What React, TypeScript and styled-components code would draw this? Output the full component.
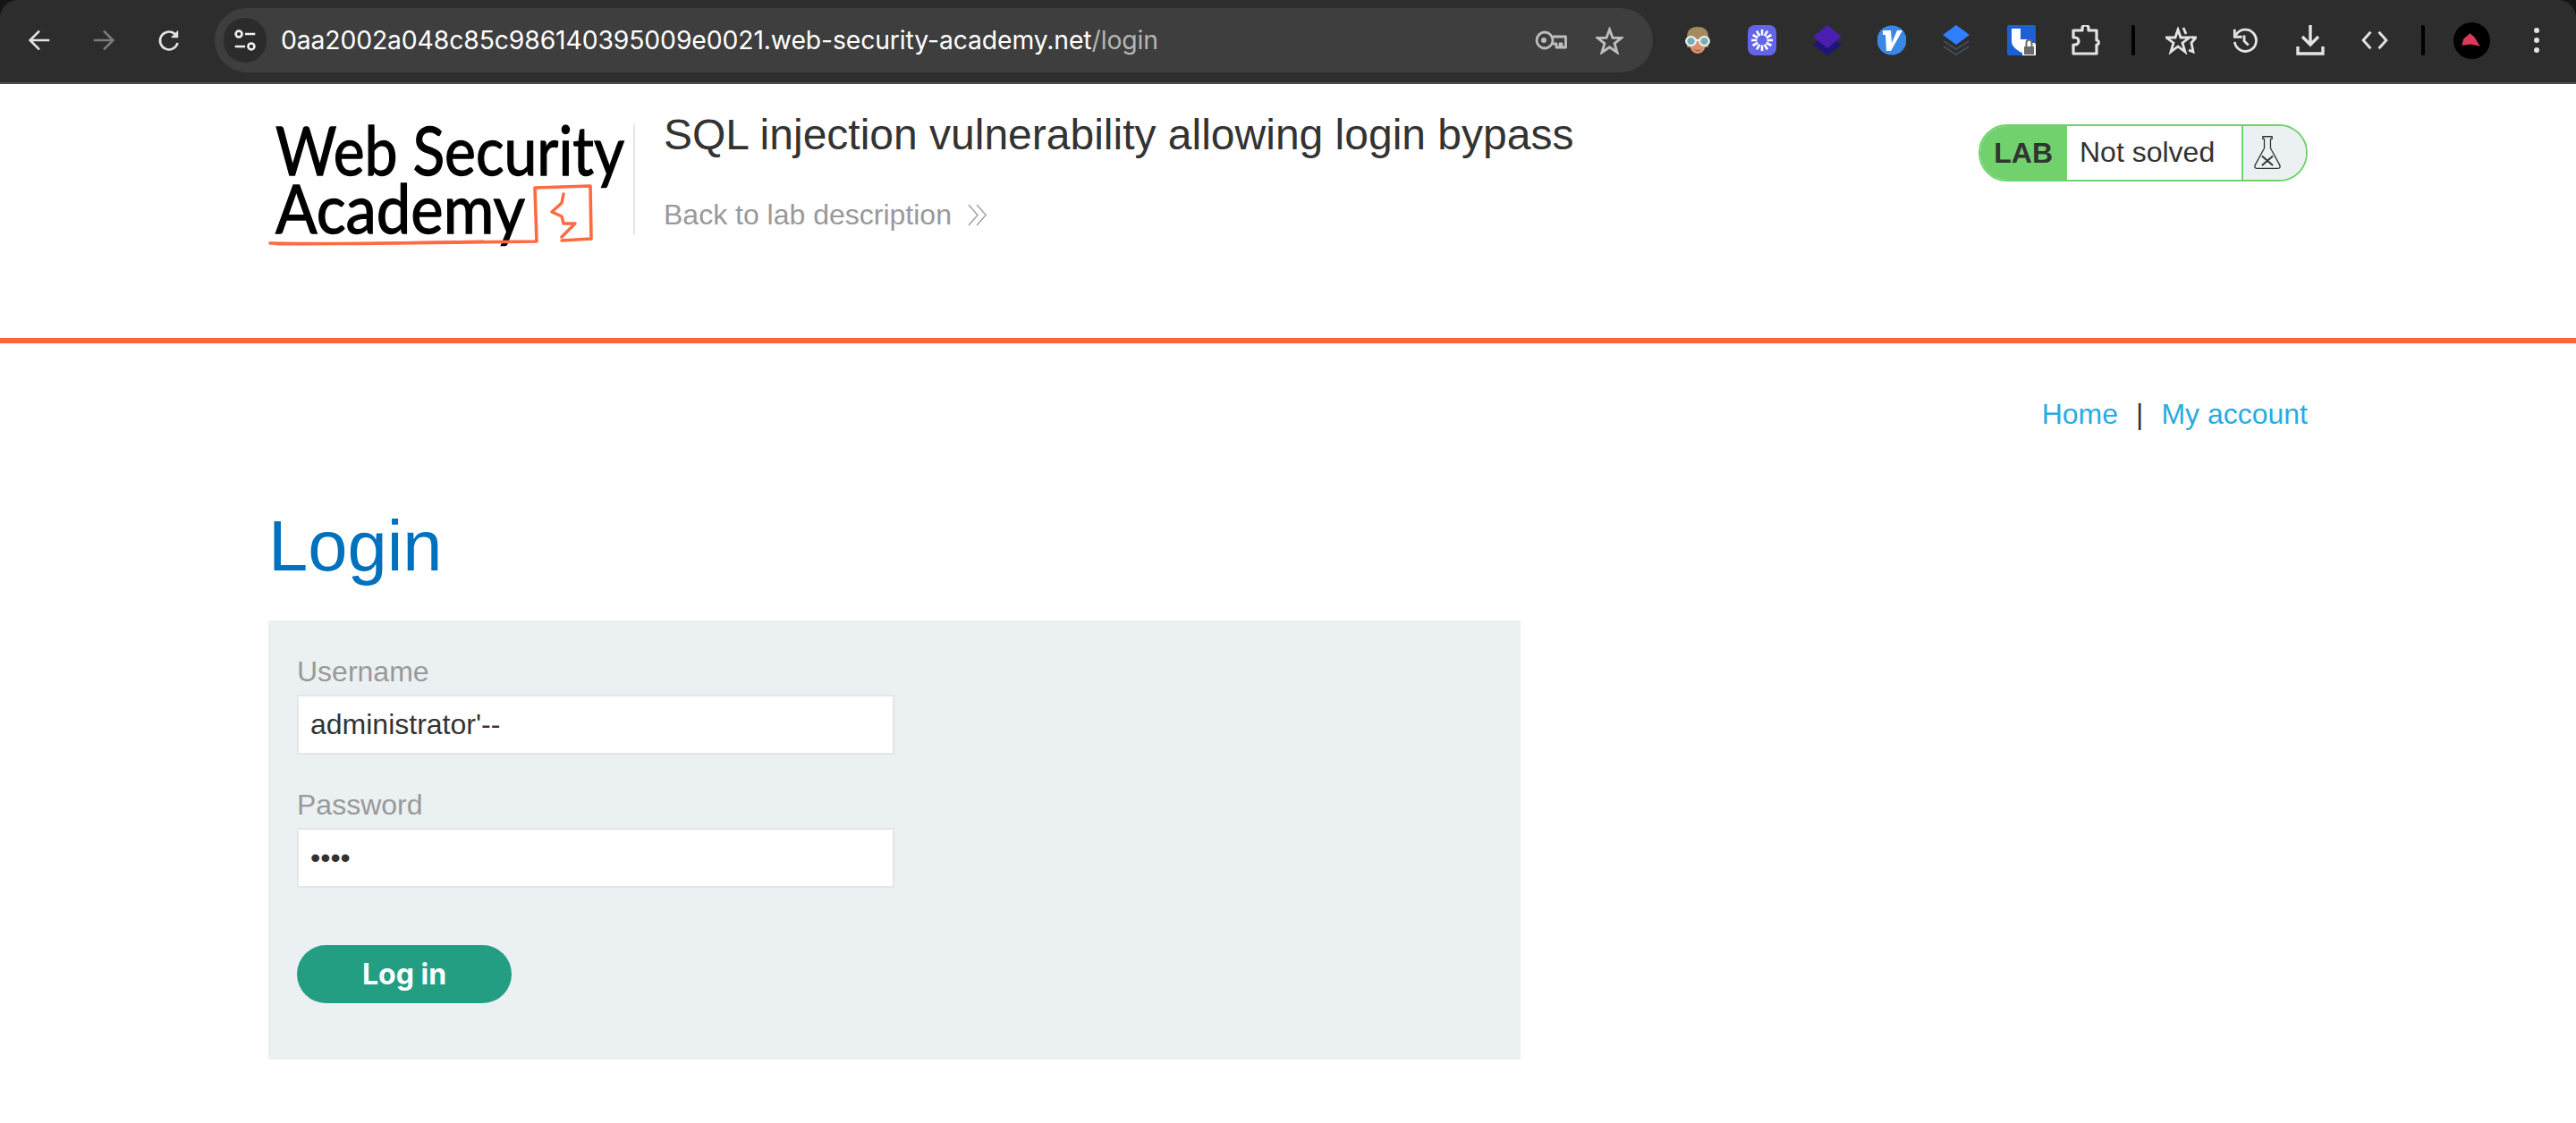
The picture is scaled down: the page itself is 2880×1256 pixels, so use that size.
import React from "react";
import styled, { createGlobalStyle } from "styled-components";

const Global = createGlobalStyle`
  html, body { margin: 0; padding: 0; background: #fff; }
  body { font-family: "Liberation Sans", Arial, sans-serif; color: #333332; }
  * { box-sizing: border-box; }
`;

const Frame = styled.div`
  width: 2880px;
  height: 1256px;
  overflow: hidden;
  display: flex;
  flex-direction: column;
`;

const ToolbarShell = styled.div`
  background: #151515;
  flex: none;
`;
const Toolbar = styled.header`
  height: 94px;
  display: flex;
  align-items: center;
  padding: 0 0 2px 8px;
  background: #2d2d2d;
  border-bottom: 2px solid #4c4c4c;
  border-radius: 20px 20px 0 0;
`;
const Slot = styled.div`
  width: 72.3px;
  height: 60px;
  flex: none;
  display: flex;
  align-items: center;
  justify-content: center;
`;
const Divider = styled.div<{ $w: number }>`
  width: ${(p) => p.$w}px;
  flex: none;
  display: flex;
  justify-content: center;
  &::before {
    content: "";
    width: 4px;
    height: 34px;
    border-radius: 2px;
    background: #000;
  }
`;
const Omnibox = styled.div`
  width: 1608px;
  height: 72px;
  margin: 0 14px 0 15px;
  flex: none;
  border-radius: 36px;
  background: #3e3e3e;
  display: flex;
  align-items: center;
  padding-left: 10px;
`;
const SiteInfo = styled.div`
  width: 48px;
  height: 50px;
  border-radius: 25px;
  background: #2b2b2b;
  flex: none;
  display: flex;
  align-items: center;
  justify-content: center;
`;
const Url = styled.div`
  margin-left: 16px;
  flex: 1;
  font-family: Inter, "Liberation Sans", sans-serif;
  font-size: 28.3px;
  white-space: nowrap;
  color: #fff;
  letter-spacing: -0.1px;
`;
const UrlPath = styled.span`
  color: #b4b4b4;
`;
const OmniIcon = styled.div`
  width: 65px;
  flex: none;
  display: flex;
  justify-content: center;
  &:last-child { margin-right: 16px; }
`;

const LabHeader = styled.section`
  height: 290px;
  flex: none;
  border-bottom: 6px solid #ff6633;
  padding: 27px 300px 0;
  display: flex;
  align-items: flex-start;
`;
const LogoLink = styled.a`
  flex: none;
  width: 408px;
  height: 150px;
  margin-top: 18px;
  display: block;
  svg { overflow: visible; display: block; }
`;
const LogoSeparator = styled.div`
  flex: none;
  width: 2px;
  height: 124px;
  margin-top: 18px;
  background: #e6e6e6;
`;
const LabTitle = styled.div`
  margin-left: 32px;
  flex: 1;
`;
const TitleHeading = styled.h2`
  margin: 0;
  font-weight: 400;
  font-size: 48px;
  line-height: 60px;
  color: #333332;
`;
const BackLink = styled.a`
  display: flex;
  align-items: center;
  gap: 18px;
  margin-top: 37px;
  font-size: 32px;
  line-height: 44px;
  color: #999;
`;
const Widget = styled.div`
  flex: none;
  width: 368px;
  height: 64px;
  margin-top: 18px;
  display: flex;
  border: 2px solid #70d16d;
  border-radius: 32px;
  overflow: hidden;
`;
const WidgetLab = styled.div`
  width: 97px;
  flex: none;
  background: #70d16d;
  font-weight: 700;
  font-size: 32px;
  display: flex;
  align-items: center;
  justify-content: flex-end;
  padding-right: 16px;
`;
const WidgetStatus = styled.div`
  flex: 1;
  padding: 0 0 2px 14px;
  font-size: 32px;
  display: flex;
  align-items: center;
  background: #fff;
`;
const WidgetIcon = styled.div`
  width: 72px;
  flex: none;
  background: #ebf0f2;
  border-left: 2px solid #70d16d;
  display: flex;
  align-items: center;
  padding-left: 11px;
`;

const Main = styled.main`
  padding: 0 300px;
`;
const TopNav = styled.nav`
  display: flex;
  justify-content: flex-end;
  align-items: center;
  height: 44px;
  margin-top: 57px;
  font-size: 32px;
`;
const NavLink = styled.a`
  color: #29abe2;
`;
const NavSep = styled.span`
  margin: 0 20px;
  color: #333332;
`;
const Heading = styled.h1`
  margin: 63px 0 21px;
  height: 125px;
  font-weight: 400;
  font-size: 79.5px;
  line-height: 125px;
  color: #0071bc;
`;
const LoginPanel = styled.form`
  width: 1400px;
  height: 491px;
  padding: 35px 32px 0;
  background: #ebf0f2;
`;
const Label = styled.label`
  display: block;
  height: 48px;
  font-size: 32px;
  line-height: 44px;
  color: #999;
`;
const Input = styled.input`
  display: block;
  width: 668px;
  height: 67px;
  margin-bottom: 34px;
  padding: 0 13px;
  border: 2px solid #e6e6e6;
  background: #fff;
  font-family: "Liberation Sans", sans-serif;
  font-size: 32px;
  color: #333332;
  outline: none;
`;
const Submit = styled.button`
  display: block;
  width: 240px;
  height: 65px;
  margin-top: 64px;
  padding: 0;
  border: 0;
  border-radius: 33px;
  background: #239e82;
  color: #fff;
  font-family: Inter, "Liberation Sans", sans-serif;
  font-weight: 700;
  font-size: 32px;
`;

const Back = () => (
  <svg width="26" height="26" viewBox="0 0 30 30" fill="none" stroke="#e3e3e3" strokeWidth="3">
    <path d="M28 15H4M15 3L3 15l12 12" />
  </svg>
);
const Fwd = () => (
  <svg width="26" height="26" viewBox="0 0 30 30" fill="none" stroke="#7b7b7b" strokeWidth="3">
    <path d="M2 15h24M15 3l12 12-12 12" />
  </svg>
);
const Reload = () => (
  <svg width="26" height="26" viewBox="0 0 30 30" fill="none" stroke="#e3e3e3" strokeWidth="3">
    <path d="M26 18.500A11.500 11.500 0 1 1 22 6.500L25 9.500" />
    <path d="M26 3v8h-8" fill="#e3e3e3" strokeWidth="1.600" />
  </svg>
);
const Tune = () => (
  <svg width="26" height="26" viewBox="0 0 30 30" fill="none" stroke="#f0f0f0" strokeWidth="3">
    <circle cx="7" cy="7" r="4" />
    <path d="M15 7h13M2 23h13" />
    <circle cx="23" cy="23" r="4" />
  </svg>
);
const KeyIcon = () => (
  <svg width="36" height="22" viewBox="0 0 36 22" fill="none" stroke="#bdbdbd" strokeWidth="2.800">
    <circle cx="11" cy="11" r="9" />
    <circle cx="10" cy="11" r="3" fill="#bdbdbd" stroke="none" />
    <path d="M20 7H34.500V19H30V15H28V19H24V15H20" strokeLinejoin="round" />
  </svg>
);
const StarIcon = () => (
  <svg width="31" height="31" viewBox="0 0 28 30" fill="none" stroke="#bdbdbd" strokeWidth="2.800">
    <path d="M14 3l3.400 9H27l-7.600 6 2.800 9.600L14 22l-8.200 5.600L8.600 18 1 12h9.600z" />
  </svg>
);
const Avatar = () => (
  <svg width="30" height="32" viewBox="0 0 28 32" preserveAspectRatio="none">
    <path d="M3 24V11C3 4 8 1 14 1s11 3 11 10v13z" fill="#a48a60" />
    <path d="M6 14h16v8c0 5-4 9-8 9s-8-4-8-9z" fill="#d9916a" />
    <path d="M10 26q4 2 8 0q-4 5-8 0z" fill="#a85f40" />
    <circle cx="7" cy="17" r="5" fill="#79aeb4" stroke="#eef2f2" strokeWidth="2" />
    <circle cx="21" cy="17" r="5" fill="#79aeb4" stroke="#eef2f2" strokeWidth="2" />
    <path d="M12 16h4" stroke="#eef2f2" strokeWidth="2" />
  </svg>
);
const BurstIcon = () => (
  <svg width="32" height="34" viewBox="0 0 32 34">
    <rect width="32" height="34" rx="8" fill="#6264ea" />
    <g stroke="#fff" strokeWidth="2.600">
      {Array.from({ length: 12 }).map((_, i) => {
        const a = (i * Math.PI) / 6;
        return (
          <line
            key={i}
            x1={16 + 5.5 * Math.cos(a)}
            y1={17 + 5.5 * Math.sin(a)}
            x2={16 + 12 * Math.cos(a)}
            y2={17 + 12 * Math.sin(a)}
          />
        );
      })}
    </g>
  </svg>
);
const DiamondIcon = () => (
  <svg width="32" height="34" viewBox="0 0 32 34">
    <path d="M16 10L32 22L16 34L0 22z" fill="#1f1478" />
    <path d="M16 0L32 13L16 26L0 13z" fill="#4a1fb0" />
  </svg>
);
const VeeIcon = () => (
  <svg width="32" height="34" viewBox="0 0 32 34">
    <circle cx="16" cy="17" r="16.500" fill="#3b87e8" />
    <path d="M6 6h9l1 14L22 6h6L15 29H10L9 11H6z" fill="#fff" />
  </svg>
);
const StackIcon = () => (
  <svg width="30" height="34" viewBox="0 0 30 34">
    <path d="M15 0l15 11-15 11L0 11z" fill="#2f7fff" />
    <path d="M1 18l14 9 14-9M1 24l14 9 14-9" stroke="#434b5c" strokeWidth="2" fill="none" />
  </svg>
);
const ShieldIcon = () => (
  <svg width="32" height="34" viewBox="0 0 32 34">
    <rect width="32" height="34" rx="2" fill="#1d5fd6" />
    <path d="M5 4h22v14c0 6-6 10-11 13C11 28 5 24 5 18z" fill="#fff" />
    <path d="M15 4h12v12H15z" fill="#1d5fd6" />
    <path d="M17 34V22q0-2 2-2h11q2 0 2 2v12z" fill="#fff" />
    <path d="M19 24h11v9H19z" fill="#6b6b6b" />
    <path d="M21.500 24v-4q0-3.500 3-3.500t3 3.500v4" stroke="#6b6b6b" strokeWidth="2" fill="none" />
  </svg>
);
const PuzzleIcon = () => (
  <svg width="32" height="34" viewBox="0 0 32 34" stroke="#e3e3e3" fill="none" strokeWidth="3.200" strokeLinejoin="round">
    <path d="M2 6h10V3.500a3.500 3.500 0 0 1 7 0V6h9v11h1a3 3 0 0 1 0 5h-1v10H2V22h2a4 4 0 0 0 0-8H2z" />
  </svg>
);
const StarsIcon = () => (
  <svg width="35" height="31" viewBox="0 0 35 31" fill="none" stroke="#e3e3e3" strokeWidth="2.800">
    <path d="M14 3l3 9h10l-8 6 3 10-8-6-8 6 3-10-8-6h10z" />
    <path d="M20 1l3 7M29 12h5l-5 6 2 10-5-2" />
  </svg>
);
const HistoryIcon = () => (
  <svg width="28" height="30" viewBox="0 0 30 32" fill="none" stroke="#e3e3e3" strokeWidth="3">
    <path d="M4 10A13 13 0 1 1 2.500 18" />
    <path d="M2.500 3v9h9" />
    <path d="M14 10v7l5 5" />
  </svg>
);
const DownloadIcon = () => (
  <svg width="32" height="34" viewBox="0 0 32 34" fill="none" stroke="#e3e3e3" strokeWidth="3.400">
    <path d="M16 0v22M7 13l9 9 9-9" />
    <path d="M2 24v8h28v-8" />
  </svg>
);
const CodeIcon = () => (
  <svg width="32" height="22" viewBox="0 0 32 24" fill="none" stroke="#e3e3e3" strokeWidth="3.200">
    <path d="M11 2L2 12l9 10M21 2l9 10-9 10" />
  </svg>
);
const ProfileIcon = () => (
  <svg width="41" height="41" viewBox="0 0 40 40">
    <circle cx="20" cy="20" r="20" fill="#000" />
    <path d="M9 25l2-7 7-6 5 4 6 10-10-2z" fill="#d93a5a" />
  </svg>
);
const DotsIcon = () => (
  <svg width="8" height="30" viewBox="0 0 8 30" fill="#e3e3e3">
    <circle cx="4" cy="4" r="3" />
    <circle cx="4" cy="15" r="3" />
    <circle cx="4" cy="26" r="3" />
  </svg>
);

const Logo = () => (
  <svg width="408" height="150" viewBox="0 0 408 150">
    <g fontFamily="Lato, 'Open Sans', sans-serif" fontSize="76" fill="#000" stroke="#000" strokeWidth="1.300">
      <text x="8" y="57" textLength="390" lengthAdjust="spacingAndGlyphs">Web Security</text>
      <text x="8" y="122" textLength="279" lengthAdjust="spacingAndGlyphs">Academy</text>
    </g>
    <g fill="none" stroke="#ff6a40" strokeLinecap="round" strokeLinejoin="round">
      <path d="M2 133Q60 134 140 133T300 131L298 71L360 69L361 128L328 130" strokeWidth="3.600" />
      <path d="M10 134Q100 134 240 131" strokeWidth="3" />
      <path d="M330 78L328 88L317 98L328 103L330 111L343 111L328 126" strokeWidth="3.400" />
    </g>
  </svg>
);

const Flask = () => (
  <svg width="32" height="40" viewBox="0 0 36 46" fill="none" stroke="#333" strokeWidth="1.500">
    <path d="M12 2h12v3h-2v12l12 22q1 4-3 4H5q-4 0-3-4l12-22V5h-2z" strokeLinejoin="round" />
    <path d="M11 27l14 12M25 27L11 39" strokeWidth="2.200" />
  </svg>
);
const Chevrons = () => (
  <svg width="22" height="25" viewBox="0 0 24 26" fill="none" stroke="#999" strokeWidth="1.400" preserveAspectRatio="none">
    <path d="M1 1l11 12L1 25M11 1l11 12-11 12" />
  </svg>
);

export default function App() {
  return (
    <Frame>
      <Global />
      <ToolbarShell>
        <Toolbar>
          <Slot><Back /></Slot>
          <Slot><Fwd /></Slot>
          <Slot><Reload /></Slot>
          <Omnibox>
            <SiteInfo><Tune /></SiteInfo>
            <Url>
              0aa2002a048c85c986140395009e0021.web-security-academy.net<UrlPath>/login</UrlPath>
            </Url>
            <OmniIcon><KeyIcon /></OmniIcon>
            <OmniIcon><StarIcon /></OmniIcon>
          </Omnibox>
          <Slot><Avatar /></Slot>
          <Slot><BurstIcon /></Slot>
          <Slot><DiamondIcon /></Slot>
          <Slot><VeeIcon /></Slot>
          <Slot><StackIcon /></Slot>
          <Slot><ShieldIcon /></Slot>
          <Slot><PuzzleIcon /></Slot>
          <Divider $w={34} />
          <Slot><StarsIcon /></Slot>
          <Slot><HistoryIcon /></Slot>
          <Slot><DownloadIcon /></Slot>
          <Slot><CodeIcon /></Slot>
          <Divider $w={36} />
          <Slot><ProfileIcon /></Slot>
          <Slot><DotsIcon /></Slot>
        </Toolbar>
      </ToolbarShell>
      <LabHeader>
        <LogoLink><Logo /></LogoLink>
        <LogoSeparator />
        <LabTitle>
          <TitleHeading>SQL injection vulnerability allowing login bypass</TitleHeading>
          <BackLink>Back to lab description <Chevrons /></BackLink>
        </LabTitle>
        <Widget>
          <WidgetLab>LAB</WidgetLab>
          <WidgetStatus>Not solved</WidgetStatus>
          <WidgetIcon><Flask /></WidgetIcon>
        </Widget>
      </LabHeader>
      <Main>
        <TopNav>
          <NavLink>Home</NavLink>
          <NavSep>|</NavSep>
          <NavLink>My account</NavLink>
        </TopNav>
        <Heading>Login</Heading>
        <LoginPanel onSubmit={(e) => e.preventDefault()}>
          <Label>Username</Label>
          <Input type="text" defaultValue="administrator'--" />
          <Label>Password</Label>
          <Input type="password" defaultValue="test" />
          <Submit type="submit">Log in</Submit>
        </LoginPanel>
      </Main>
    </Frame>
  );
}
